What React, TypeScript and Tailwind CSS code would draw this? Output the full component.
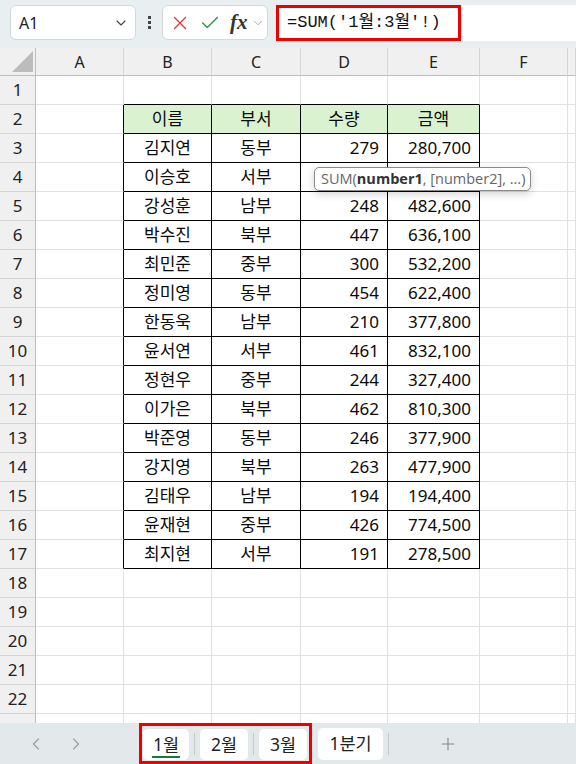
import { Check, ChevronDown, ChevronLeft, ChevronRight, Plus, X } from 'lucide-react'

const COLS = ['A', 'B', 'C', 'D', 'E', 'F', '']

// rows 2..17 hold the bordered table in columns B..E
// row 4's numbers sit under the function tooltip, so they're left blank
const TABLE: string[][] = [
  ['이름', '부서', '수량', '금액'],
  ['김지연', '동부', '279', '280,700'],
  ['이승호', '서부', '', ''],
  ['강성훈', '남부', '248', '482,600'],
  ['박수진', '북부', '447', '636,100'],
  ['최민준', '중부', '300', '532,200'],
  ['정미영', '동부', '454', '622,400'],
  ['한동욱', '남부', '210', '377,800'],
  ['윤서연', '서부', '461', '832,100'],
  ['정현우', '중부', '244', '327,400'],
  ['이가은', '북부', '462', '810,300'],
  ['박준영', '동부', '246', '377,900'],
  ['강지영', '북부', '263', '477,900'],
  ['김태우', '남부', '194', '194,400'],
  ['윤재현', '중부', '426', '774,500'],
  ['최지현', '서부', '191', '278,500'],
]

const ROWS = 23

function inTable(r: number, c: number) {
  // r: 1-based sheet row, c: 0 = A
  return r >= 2 && r <= 17 && c >= 1 && c <= 4
}

function Cell({ r, c }: { r: number; c: number }) {
  const t = inTable(r, c)
  const right = t || inTable(r, c + 1)
  const bottom = t || inTable(r + 1, c)
  const value = t ? TABLE[r - 2][c - 1] : ''
  const header = r === 2 && t
  const numeric = t && r > 2 && c >= 3
  return (
    <div
      className={`h-[29px] border-r border-b flex items-center text-[17px] text-[#0a0a0a] ${
        right ? 'border-r-black' : 'border-r-[#e1e1e1]'
      } ${bottom ? 'border-b-black' : 'border-b-[#e1e1e1]'} ${header ? 'bg-[#daf2d0]' : 'bg-white'} ${
        numeric ? 'justify-end pr-[8px]' : 'justify-center'
      }`}
    >
      {value}
    </div>
  )
}

export default function App() {
  return (
    <div className="w-[576px] h-[764px] overflow-hidden flex flex-col bg-white font-['Noto_Sans','Noto_Sans_CJK_KR',sans-serif] relative">
      {/* Formula bar */}
      <div className="h-[48px] shrink-0 bg-[#e9eef1] flex items-start pt-[5px] pl-[10px]">
        <div className="w-[126px] h-[35px] rounded-[6px] border border-[#d3d8dc] bg-white flex items-center justify-between pl-[8px] pr-[6px]">
          <span className="text-[16px] text-[#222]">A1</span>
          <ChevronDown size={16} strokeWidth={1.6} className="text-[#444]" />
        </div>
        <div className="w-[26px] h-[35px] flex flex-col items-center justify-center gap-[2px]">
          <span className="w-[3px] h-[3px] bg-[#444]" />
          <span className="w-[3px] h-[3px] bg-[#444]" />
          <span className="w-[3px] h-[3px] bg-[#444]" />
        </div>
        <div className="w-[106px] h-[35px] rounded-[6px] border border-[#d3d8dc] bg-white flex items-center pl-[6px]">
          <X size={22} strokeWidth={1.5} className="text-[#e5383b]" />
          <Check size={22} strokeWidth={1.6} className="text-[#2e9a48] ml-[8px]" />
          <span className="ml-[9px] text-[21px] leading-none italic font-semibold text-[#333] font-['Liberation_Serif',serif]">fx</span>
          <ChevronDown size={14} strokeWidth={1.5} className="text-[#999] ml-[3px]" />
        </div>
        <div className="ml-[8px] flex-1 h-[36px] bg-white flex items-center">
          <div className="w-[185px] h-[36px] border-[3px] border-[#ec0000] flex items-center pl-[8px]">
            <span className="text-[17px] text-[#111] font-['Liberation_Mono','Noto_Sans_CJK_KR',monospace]">
              =SUM('1월:3월'!)
            </span>
          </div>
        </div>
      </div>

      {/* Sheet grid */}
      <div className="flex-1 overflow-hidden">
        <div className="grid grid-cols-[36px_88px_88px_89px_87px_92px_88px_8px]">
          {/* column headers */}
          <div className="h-[28px] bg-[#f0f0f0] border-r border-b border-r-[#bdbdbd] border-b-[#bdbdbd] relative">
            <svg width="22" height="22" className="absolute left-[12px] top-[3px]">
              <polygon points="21,0 21,21 0,21" fill="#bcbcbc" />
            </svg>
          </div>
          {COLS.map((c, i) => (
            <div
              key={i}
              className="h-[28px] bg-[#f0f0f0] border-r border-b border-r-[#d4d4d4] border-b-[#bdbdbd] flex items-center justify-center text-[16px] text-[#222]"
            >
              {c}
            </div>
          ))}
          {Array.from({ length: ROWS }, (_, ri) => {
            const r = ri + 1
            return [
              <div
                key={`h${r}`}
                className="h-[29px] bg-[#f0f0f0] border-r border-b border-r-[#bdbdbd] border-b-[#d4d4d4] flex items-center justify-center text-[17px] text-[#222]"
              >
                {r < ROWS ? r : ''}
              </div>,
              ...COLS.map((_, c) => <Cell key={`${r}-${c}`} r={r} c={c} />),
            ]
          })}
        </div>
      </div>

      {/* Function tooltip */}
      <div className="absolute left-[314px] top-[167px] w-[217px] h-[24px] rounded-[5px] border border-[#8a8a8a] bg-white shadow-[0_3px_8px_rgba(0,0,0,0.18)] flex items-center pl-[6px] text-[14.5px] text-[#666] font-['Open_Sans',sans-serif] whitespace-nowrap">
        SUM(<b className="text-[#333] font-bold">number1</b>, [number2], ...)
      </div>

      {/* Sheet tabs */}
      <div className="h-[41px] shrink-0 bg-[#e3e9eb] flex items-stretch text-[17.5px] text-[#222]">
        <div className="w-[139px] flex items-center">
          <ChevronLeft size={20} strokeWidth={1.4} className="text-[#9a9a9a] ml-[26px]" />
          <ChevronRight size={20} strokeWidth={1.4} className="text-[#9a9a9a] ml-[20px]" />
        </div>
        <div className="w-[173px] border-[3px] border-[#ec0000] flex items-center">
          <div className="ml-[1px] w-[46px] h-[31px] mt-[1px] rounded-[5px] bg-white flex flex-col items-center justify-center relative">
            <span>1월</span>
            <span className="absolute bottom-[2px] w-[28px] h-[2px] bg-[#107c41]" />
          </div>
          <span className="w-[1px] h-[22px] bg-[#c5cbcd] mx-[5px]" />
          <div className="w-[48px] h-[31px] mt-[1px] rounded-[5px] bg-white flex items-center justify-center">2월</div>
          <span className="w-[1px] h-[22px] bg-[#c5cbcd] mx-[5px]" />
          <div className="w-[48px] h-[31px] mt-[1px] rounded-[5px] bg-white flex items-center justify-center">3월</div>
        </div>
        <div className="flex items-center">
          <div className="ml-[6px] w-[65px] h-[32px] rounded-[5px] bg-white flex items-center justify-center">1분기</div>
          <span className="w-[1px] h-[22px] bg-[#c5cbcd] ml-[5px]" />
          <Plus size={20} strokeWidth={1.3} className="text-[#888] ml-[49px]" />
        </div>
      </div>
    </div>
  )
}
